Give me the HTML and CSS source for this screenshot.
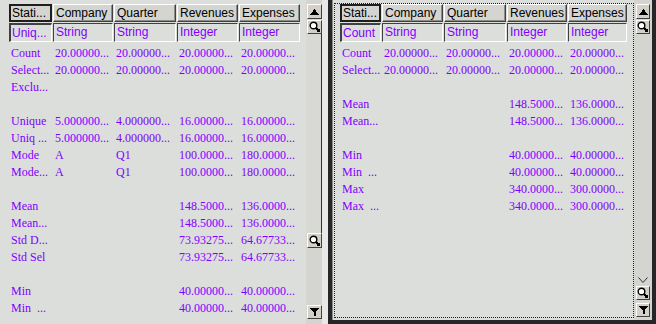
FILE: index.html
```html
<!DOCTYPE html>
<html lang="en">
<head>
    <meta charset="UTF-8">
    <meta name="viewport" content="width=device-width, initial-scale=1.0">
    <title>Statistics</title>
    <link rel="stylesheet" href="styles.css">
</head>
<body>
    <div class="screen">
        <section class="pane pane-left">
            <div class="cols head-row">
                <div class="head-cell active">Stati...</div>
                <div class="head-cell">Company</div>
                <div class="head-cell">Quarter</div>
                <div class="head-cell">Revenues</div>
                <div class="head-cell">Expenses</div>
            </div>
            <div class="cols type-row">
                <div class="type-cell active">Uniq...</div>
                <div class="type-cell">String</div>
                <div class="type-cell">String</div>
                <div class="type-cell">Integer</div>
                <div class="type-cell">Integer</div>
            </div>
            <div class="data" id="leftData"></div>
        </section>

        <div class="scrollbar scrollbar-left">
            <span class="sb-btn sb-up">
                <svg width="9" height="6" viewBox="0 0 9 6"><path d="M4.5 0L9 6H0Z"/></svg>
            </span>
            <span class="sb-btn sb-mag">
                <svg width="12" height="12" viewBox="0 0 12 12"><circle cx="4.5" cy="4.5" r="3.3" fill="#fff" stroke="#000" stroke-width="1.4"/><path d="M7 7L10 10M10 8V11M8 10H11" stroke="#000" stroke-width="1.8"/></svg>
            </span>
            <span class="sb-thumb"></span>
            <span class="sb-btn sb-mag2">
                <svg width="12" height="12" viewBox="0 0 12 12"><circle cx="4.5" cy="4.5" r="3.3" fill="#fff" stroke="#000" stroke-width="1.4"/><path d="M7 7L10 10M10 8V11M8 10H11" stroke="#000" stroke-width="1.8"/></svg>
            </span>
            <span class="sb-track"></span>
            <span class="sb-btn sb-down">
                <svg width="9" height="8" viewBox="0 0 9 8"><path d="M0 0H9L4.5 5.5Z"/><path d="M3.5 4H5.5V8H3.5Z"/></svg>
            </span>
        </div>

        <div class="gutter"></div>

        <section class="frame">
            <div class="pane pane-right">
                <div class="cols head-row">
                    <div class="head-cell active">Stati...</div>
                    <div class="head-cell">Company</div>
                    <div class="head-cell">Quarter</div>
                    <div class="head-cell">Revenues</div>
                    <div class="head-cell">Expenses</div>
                </div>
                <div class="cols type-row">
                    <div class="type-cell active">Count</div>
                    <div class="type-cell">String</div>
                    <div class="type-cell">String</div>
                    <div class="type-cell">Integer</div>
                    <div class="type-cell">Integer</div>
                </div>
                <div class="data" id="rightData"></div>
            </div>
            <div class="scrollbar scrollbar-right">
                <span class="sb-btn sb-up">
                    <svg width="9" height="6" viewBox="0 0 9 6"><path d="M4.5 0L9 6H0Z"/></svg>
                </span>
                <span class="sb-btn sb-mag">
                    <svg width="12" height="12" viewBox="0 0 12 12"><circle cx="4.5" cy="4.5" r="3.3" fill="#fff" stroke="#000" stroke-width="1.4"/><path d="M7 7L10 10M10 8V11M8 10H11" stroke="#000" stroke-width="1.8"/></svg>
                </span>
                <span class="sb-track"></span>
                <svg class="sb-grip" width="10" height="6" viewBox="0 0 10 6"><path d="M0.5 0.5L5 5.5L9.5 0.5" fill="none" stroke="#333" stroke-width="1"/></svg>
                <span class="sb-btn sb-mag">
                    <svg width="12" height="12" viewBox="0 0 12 12"><circle cx="4.5" cy="4.5" r="3.3" fill="#fff" stroke="#000" stroke-width="1.4"/><path d="M7 7L10 10M10 8V11M8 10H11" stroke="#000" stroke-width="1.8"/></svg>
                </span>
                <span class="sb-btn sb-down">
                    <svg width="9" height="8" viewBox="0 0 9 8"><path d="M0 0H9L4.5 5.5Z"/><path d="M3.5 4H5.5V8H3.5Z"/></svg>
                </span>
            </div>
        </section>
    </div>

    <script>
        document.addEventListener('DOMContentLoaded', () => {
            const twenty = '20.00000...';

            // строки левой таблицы
            const leftRows = [
                ['Count', twenty, twenty, twenty, twenty],
                ['Select...', twenty, twenty, twenty, twenty],
                ['Exclu...'],
                [],
                ['Unique', '5.000000...', '4.000000...', '16.00000...', '16.00000...'],
                ['Uniq ...', '5.000000...', '4.000000...', '16.00000...', '16.00000...'],
                ['Mode', 'A', 'Q1', '100.0000...', '180.0000...'],
                ['Mode...', 'A', 'Q1', '100.0000...', '180.0000...'],
                [],
                ['Mean', '', '', '148.5000...', '136.0000...'],
                ['Mean...', '', '', '148.5000...', '136.0000...'],
                ['Std D...', '', '', '73.93275...', '64.67733...'],
                ['Std Sel', '', '', '73.93275...', '64.67733...'],
                [],
                ['Min', '', '', '40.00000...', '40.00000...'],
                ['Min\u00a0 ...', '', '', '40.00000...', '40.00000...']
            ];

            // строки правой таблицы
            const rightRows = [
                ['Count', twenty, twenty, twenty, twenty],
                ['Select...', twenty, twenty, twenty, twenty],
                [],
                ['Mean', '', '', '148.5000...', '136.0000...'],
                ['Mean...', '', '', '148.5000...', '136.0000...'],
                [],
                ['Min', '', '', '40.00000...', '40.00000...'],
                ['Min\u00a0 ...', '', '', '40.00000...', '40.00000...'],
                ['Max', '', '', '340.0000...', '300.0000...'],
                ['Max\u00a0 ...', '', '', '340.0000...', '300.0000...']
            ];

            function renderRows(id, rows) {
                const box = document.getElementById(id);
                rows.forEach(row => {
                    const div = document.createElement('div');
                    div.className = 'cols data-row';
                    for (let i = 0; i < 5; i++) {
                        const span = document.createElement('span');
                        span.textContent = row[i] || '';
                        div.appendChild(span);
                    }
                    box.appendChild(div);
                });
            }

            renderRows('leftData', leftRows);
            renderRows('rightData', rightRows);
        });
    </script>
</body>
</html>
```

FILE: styles.css
```css
* {
    box-sizing: border-box;
}
body {
    margin: 0;
    background: #dcdedb;
    font-family: 'Liberation Sans', Arial, sans-serif;
}
.screen {
    display: flex;
    width: 656px;
    height: 324px;
    overflow: hidden;
}
.pane {
    background: #dcdedb;
}
.pane-left {
    width: 306px;
    padding: 4px 0 0 9px;
}
.cols {
    display: grid;
    grid-template-columns: 43px 60px 62px 61px 61px;
    column-gap: 1px;
}
.pane-right .cols {
    grid-template-columns: 41px 61px 62px 60px 59px;
}
.head-cell {
    height: 18px;
    line-height: 16px;
    font-size: 12px;
    color: #000;
    background: #d4d4d0;
    border: 1px solid;
    border-color: #fff #404040 #404040 #fff;
    box-shadow: inset -1px -1px 0 #8c8c88;
    padding-left: 2px;
    white-space: nowrap;
    overflow: hidden;
}
.head-cell.active {
    border: 2px solid #1e1e1e;
    box-shadow: none;
    padding-left: 1px;
    line-height: 14px;
}
.type-row {
    margin-top: 1px;
}
.type-cell {
    height: 19px;
    line-height: 17px;
    font-size: 12px;
    color: #8000ff;
    background: #dcdedb;
    border: 1px solid;
    border-color: #404040 #fff #fff #404040;
    padding-left: 2px;
    white-space: nowrap;
    overflow: hidden;
}
.type-cell.active {
    border-width: 2px 1px 1px 2px;
    padding-left: 1px;
    line-height: 16px;
}
.data {
    margin-top: 3px;
    font-family: 'Liberation Serif', 'Times New Roman', serif;
    font-size: 12px;
    color: #8000ff;
}
.data-row {
    height: 17px;
    line-height: 17px;
}
.data-row span {
    padding-left: 2px;
    white-space: pre;
    overflow: hidden;
}

/* полосы прокрутки */
.scrollbar {
    display: flex;
    flex-direction: column;
    background: #d4d4d0;
}
.sb-btn {
    flex: none;
    display: flex;
    align-items: center;
    justify-content: center;
    width: 15px;
    height: 14px;
    background: #d4d0c8;
    border: 1px solid;
    border-color: #fff #404040 #404040 #fff;
}
.sb-btn svg {
    display: block;
    shape-rendering: crispEdges;
}
.sb-btn svg circle {
    shape-rendering: auto;
}
.sb-up {
    height: 15px;
}
.sb-mag {
    margin-top: 1px;
}
.sb-track {
    flex: 1;
}
.scrollbar-left {
    width: 16px;
    padding-top: 4px;
    padding-bottom: 5px;
}
.scrollbar-left .sb-btn {
    margin-left: 1px;
}
.sb-thumb {
    flex: none;
    height: 199px;
    background: #d8d8d4;
    border-right: 1px solid #303030;
}
.sb-mag2 {
    height: 15px;
}
.gutter {
    width: 6px;
    background: #e8e8e6;
}
.frame {
    display: flex;
    width: 328px;
    border: 4px solid #262626;
    border-top: 0;
    background: #dcdedb;
    box-shadow: inset 1px 0 0 #8c8c88;
}
.pane-right {
    width: 300px;
    margin: 3px 0 2px 2px;
    border: 1px dotted #202020;
    padding-left: 5px;
}
.scrollbar-right {
    width: 18px;
    padding: 4px 0 3px 2px;
}
.scrollbar-right .sb-btn {
    width: 14px;
}
.sb-grip {
    margin: 0 0 2px 2px;
}
.scrollbar-right .sb-down {
    margin-top: 3px;
}
```
